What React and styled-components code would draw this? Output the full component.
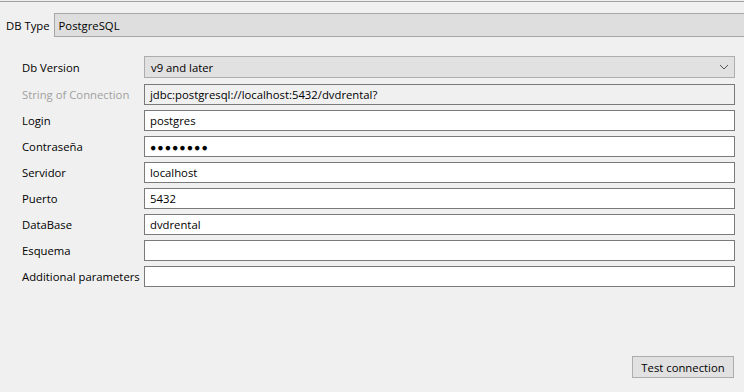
import styled, { createGlobalStyle } from 'styled-components';

const GlobalStyle = createGlobalStyle`
  html, body {
    margin: 0;
    padding: 0;
    background: #f0f0f0;
  }
  body {
    font-family: "Open Sans", "Noto Sans", sans-serif;
    font-size: 11.3px;
    color: #000;
  }
`;

const Page = styled.div`
  width: 744px;
  height: 392px;
  background: #f0f0f0;
  border-top: 1px solid #f0f0f0;
  box-sizing: border-box;
  display: flex;
  flex-direction: column;
  overflow: hidden;
`;

const TopRule = styled.div`
  height: 1px;
  background: #a0a0a0;
`;

const TypeBar = styled.div`
  display: flex;
  align-items: center;
  margin-top: 11px;
  padding-left: 6px;
  gap: 4px;
`;

const TypeLabel = styled.span`
  font-size: 11.3px;
`;

const TypeBox = styled.div`
  flex: 1;
  height: 22px;
  margin-right: -4px;
  background: #dedede;
  border: 1px solid #a8a8a8;
  display: flex;
  align-items: center;
  padding-left: 4px;
`;

const Form = styled.div`
  display: grid;
  grid-template-columns: 122px 1fr;
  row-gap: 5px;
  padding: 19px 9px 0 22px;
  align-items: center;
`;

const Label = styled.span`
  color: ${(p) => (p.$disabled ? '#a0a0a0' : '#000')};
  white-space: nowrap;
`;

const Field = styled.div`
  height: 21px;
  box-sizing: border-box;
  border: 1px solid #7a7a7a;
  background: ${(p) => (p.$disabled ? '#f0f0f0' : '#fff')};
  display: flex;
  align-items: center;
  padding-left: 5px;
  letter-spacing: ${(p) => (p.$password ? '1px' : 'normal')};
  font-size: ${(p) => (p.$password ? '10.5px' : '11.3px')};
`;

const Select = styled.div`
  height: 22px;
  box-sizing: border-box;
  border: 1px solid #adadad;
  background: #e1e1e1;
  display: flex;
  align-items: center;
  justify-content: space-between;
  padding: 0 5px 0 6px;
  margin-bottom: 1px;
`;

const Footer = styled.div`
  margin-top: auto;
  display: flex;
  justify-content: flex-end;
  padding: 0 10px 14px 0;
`;

const Button = styled.button`
  width: 102px;
  height: 22px;
  border: 1px solid #adadad;
  background: #e1e1e1;
  font-family: inherit;
  font-size: 11.3px;
  color: #000;
  padding: 0;
`;

const Chevron = () => (
  <svg width="10" height="6" viewBox="0 0 10 6">
    <path d="M1 1 L5 5 L9 1" fill="none" stroke="#555" strokeWidth="1" />
  </svg>
);

const rows = [
  { label: 'Login', value: 'postgres' },
  { label: 'Contraseña', value: '●●●●●●●●', password: true },
  { label: 'Servidor', value: 'localhost' },
  { label: 'Puerto', value: '5432' },
  { label: 'DataBase', value: 'dvdrental' },
  { label: 'Esquema', value: '' },
  { label: 'Additional parameters', value: '' },
];

const App = () => {
  return (
    <>
      <GlobalStyle />
      <Page>
        <TopRule />
        <TypeBar>
          <TypeLabel>DB Type</TypeLabel>
          <TypeBox>PostgreSQL</TypeBox>
        </TypeBar>
        <Form>
          <Label>Db Version</Label>
          <Select>
            <span>v9 and later</span>
            <Chevron />
          </Select>
          <Label $disabled>String of Connection</Label>
          <Field $disabled>jdbc:postgresql://localhost:5432/dvdrental?</Field>
          {rows.map((r) => (
            <FormRow key={r.label} {...r} />
          ))}
        </Form>
        <Footer>
          <Button>Test connection</Button>
        </Footer>
      </Page>
    </>
  );
};

const FormRow = ({ label, value, password }) => (
  <>
    <Label>{label}</Label>
    <Field $password={password}>{value}</Field>
  </>
);

export default App;
